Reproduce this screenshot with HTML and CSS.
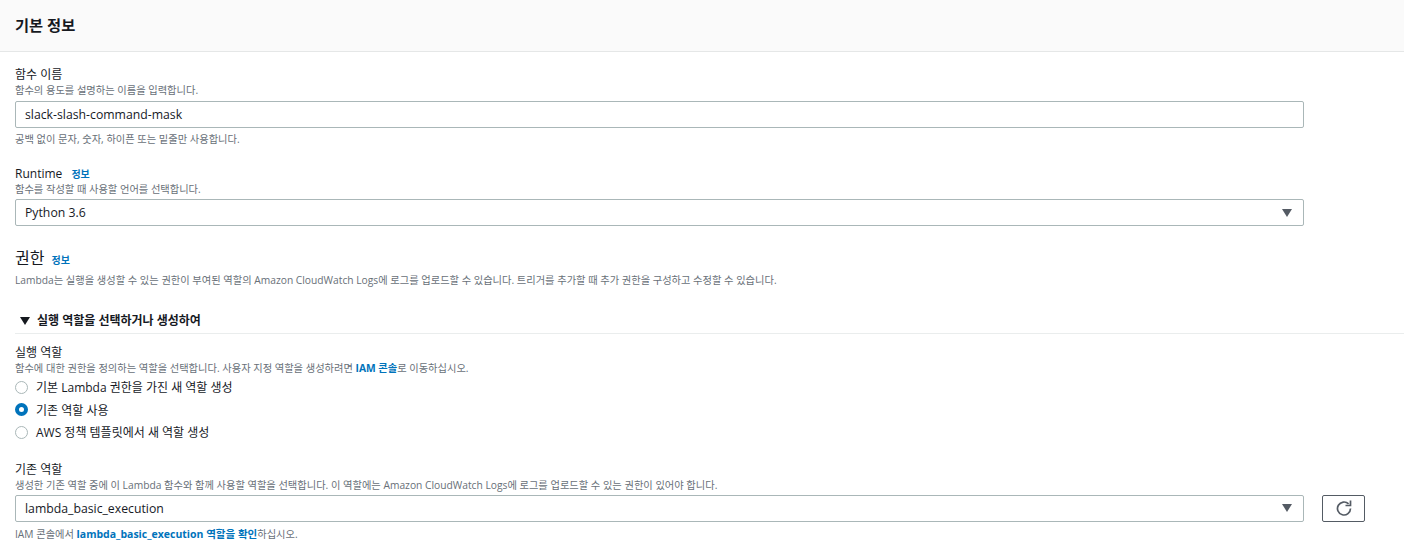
FILE: index.html
```html
<!DOCTYPE html>
<html lang="ko">
<head>
<meta charset="utf-8">
<title>기본 정보</title>
<link rel="stylesheet" href="styles.css">
</head>
<body>
<header class="header"><h2 class="title">기본 정보</h2></header>
<main class="content">
  <section class="field f-name">
    <div class="label">함수 이름</div>
    <div class="desc">함수의 용도를 설명하는 이름을 입력합니다.</div>
    <div class="control-row"><div class="box">slack-slash-command-mask</div></div>
    <div class="hint">공백 없이 문자, 숫자, 하이픈 또는 밑줄만 사용합니다.</div>
  </section>
  <section class="field f-runtime">
    <div class="label">Runtime <a class="info">정보</a></div>
    <div class="desc">함수를 작성할 때 사용할 언어를 선택합니다.</div>
    <div class="control-row"><div class="box select">Python 3.6<svg class="caret" viewBox="0 0 10 8"><path d="M0 0h10L5 8z"/></svg></div></div>
  </section>
  <section class="perm">
    <h3 class="perm-title">권한 <a class="info">정보</a></h3>
    <p class="desc perm-text">Lambda는 실행을 생성할 수 있는 권한이 부여된 역할의 Amazon CloudWatch Logs에 로그를 업로드할 수 있습니다. 트리거를 추가할 때 추가 권한을 구성하고 수정할 수 있습니다.</p>
  </section>
  <div class="expander"><svg class="exp-caret" viewBox="0 0 10 8"><path d="M0 0h10L5 8z"/></svg>실행 역할을 선택하거나 생성하여</div>
  <section class="field f-role">
    <div class="label">실행 역할</div>
    <div class="desc">함수에 대한 권한을 정의하는 역할을 선택합니다. 사용자 지정 역할을 생성하려면 <a class="link">IAM 콘솔</a>로 이동하십시오.</div>
    <div class="radios">
      <div class="radio"><span class="dot"></span>기본 Lambda 권한을 가진 새 역할 생성</div>
      <div class="radio"><span class="dot on"></span>기존 역할 사용</div>
      <div class="radio"><span class="dot"></span>AWS 정책 템플릿에서 새 역할 생성</div>
    </div>
  </section>
  <section class="field f-existing">
    <div class="label">기존 역할</div>
    <div class="desc">생성한 기존 역할 중에 이 Lambda 함수와 함께 사용할 역할을 선택합니다. 이 역할에는 Amazon CloudWatch Logs에 로그를 업로드할 수 있는 권한이 있어야 합니다.</div>
    <div class="control-row">
      <div class="box select">lambda_basic_execution<svg class="caret" viewBox="0 0 10 8"><path d="M0 0h10L5 8z"/></svg></div>
      <button class="refresh" aria-label="새로 고침"><svg viewBox="0 0 16 16" class="refresh-icon"><path d="M14.5 8.5A6.5 6.5 0 1 1 12.6 3.9"/><path d="M14.5 .5v5h-5"/></svg></button>
    </div>
    <div class="hint">IAM 콘솔에서 <a class="link link-wide">lambda_basic_execution 역할을 확인</a>하십시오.</div>
  </section>
</main>
</body>
</html>
```

FILE: styles.css
```css
* { box-sizing: border-box; }
html, body { margin: 0; padding: 0; }
body {
  background: #fff;
  color: #16191f;
  font-family: "Open Sans", "Noto Sans CJK KR", sans-serif;
  font-size: 13px;
  overflow: hidden;
  height: 556px;
}
.header {
  height: 52px;
  background: #fafafa;
  border-bottom: 1px solid #e5e7e7;
  padding: 14px 15px 0;
}
.title {
  margin: 0;
  font-size: 15.3px;
  line-height: 22px;
  font-weight: 700;
}
.content { padding: 0 0 0 15px; }
.label { font-size: 12px; line-height: 16px; color: #16191f; }
.desc { font-size: 10.25px; line-height: 16px; color: #687078; margin: -1px 0 0; }
.hint { font-size: 10.25px; line-height: 16px; color: #687078; margin-top: 3px; }
.info { color: #0073bb; font-size: 10px; font-weight: 700; margin-left: 6px; }
.link { color: #0073bb; font-weight: 700; }
.link-wide { font-size: 10.5px; }
.control-row { display: flex; gap: 18px; margin-top: 3px; }
.box {
  flex: 0 0 1289px;
  height: 27px;
  border: 1px solid #aab7b8;
  border-radius: 2px;
  padding: 0 11px 0 9px;
  font-size: 12.25px;
  line-height: 25px;
  display: flex;
  align-items: center;
  justify-content: space-between;
}
.caret { width: 10px; height: 8px; fill: #545b64; }
.f-name { padding-top: 15px; }
.f-runtime { padding-top: 19px; }
.f-runtime .control-row { margin-top: 2px; }
.perm { padding-top: 20px; }
.perm-title { margin: 0; font-size: 16px; line-height: 24px; font-weight: 400; }
.perm-title .info { margin-left: 3px; }
.perm-text { margin-top: 0; white-space: nowrap; }
.expander {
  margin-top: 23px;
  height: 23px;
  border-bottom: 1px solid #eaeded;
  font-size: 12px;
  font-weight: 700;
  line-height: 20px;
  display: flex;
  align-items: flex-start;
  padding-left: 5px;
}
.exp-caret { width: 10px; height: 8px; fill: #16191f; margin: 6px 7px 0 0; }
.f-role { padding-top: 11px; }
.radios { display: flex; flex-direction: column; }
.radio {
  display: flex;
  align-items: center;
  height: 22.5px;
  font-size: 12px;
}
.dot {
  width: 13px;
  height: 13px;
  border-radius: 50%;
  border: 1px solid #aab7b8;
  margin-right: 8px;
  flex: none;
}
.dot.on { border: 4px solid #0073bb; }
.f-existing { padding-top: 18px; }
.f-existing .control-row { margin-top: 2px; }
.f-existing .hint { margin-top: 4px; }
.refresh {
  flex: none;
  width: 43px;
  height: 27px;
  background: #fff;
  border: 1px solid #545b64;
  border-radius: 2px;
  padding: 0;
  display: flex;
  align-items: center;
  justify-content: center;
}
.refresh-icon { width: 16px; height: 16px; fill: none; stroke: #545b64; stroke-width: 1.7; }
```
